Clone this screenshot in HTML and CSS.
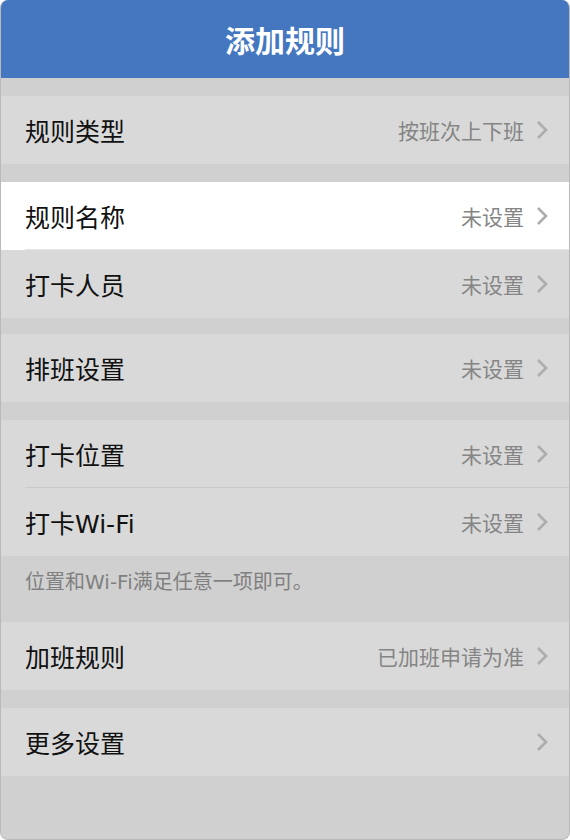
FILE: index.html
```html
<!DOCTYPE html>
<html lang="zh-CN">

<head>
  <meta charset="UTF-8">
  <meta name="viewport" content="width=device-width, initial-scale=1.0">
  <title>添加规则</title>
  <link rel="stylesheet" href="styles.css">
</head>

<body>
  <div class="app">
    <header>添加规则</header>

    <div class="group">
      <div class="row"><span class="label">规则类型</span><span class="value">按班次上下班</span><svg class="arrow" viewBox="0 0 12 20"><polyline points="2,2 10,10 2,18" /></svg></div>
    </div>

    <div class="group">
      <div class="row active"><span class="label">规则名称</span><span class="value">未设置</span><svg class="arrow" viewBox="0 0 12 20"><polyline points="2,2 10,10 2,18" /></svg></div>
      <div class="row"><span class="label">打卡人员</span><span class="value">未设置</span><svg class="arrow" viewBox="0 0 12 20"><polyline points="2,2 10,10 2,18" /></svg></div>
    </div>

    <div class="group small-gap">
      <div class="row"><span class="label">排班设置</span><span class="value">未设置</span><svg class="arrow" viewBox="0 0 12 20"><polyline points="2,2 10,10 2,18" /></svg></div>
    </div>

    <div class="group">
      <div class="row"><span class="label">打卡位置</span><span class="value">未设置</span><svg class="arrow" viewBox="0 0 12 20"><polyline points="2,2 10,10 2,18" /></svg></div>
      <div class="row"><span class="label">打卡Wi-Fi</span><span class="value">未设置</span><svg class="arrow" viewBox="0 0 12 20"><polyline points="2,2 10,10 2,18" /></svg></div>
    </div>
    <p class="note">位置和Wi-Fi满足任意一项即可。</p>

    <div class="group no-gap">
      <div class="row"><span class="label">加班规则</span><span class="value">已加班申请为准</span><svg class="arrow" viewBox="0 0 12 20"><polyline points="2,2 10,10 2,18" /></svg></div>
    </div>

    <div class="group">
      <div class="row"><span class="label">更多设置</span><span class="value"></span><svg class="arrow" viewBox="0 0 12 20"><polyline points="2,2 10,10 2,18" /></svg></div>
    </div>
  </div>
</body>

</html>
```

FILE: styles.css
```css
body {
  margin: 0;
  padding: 0;
  background: #ffffff;
  font-family: "DejaVu Sans", "Noto Sans CJK SC", sans-serif;
}

.app {
  box-sizing: border-box;
  width: 570px;
  height: 840px;
  background: #d0d0d0;
  border: 1px solid #b9b9b9;
  border-top: none;
  border-radius: 8px;
  overflow: hidden;
}

header {
  height: 78px;
  background-color: #4477bf;
  color: white;
  font-size: 30px;
  font-weight: bold;
  display: flex;
  align-items: center;
  justify-content: center;
}

.group {
  margin-top: 18px;
  background: #d9d9d9;
}

.group.small-gap {
  margin-top: 16px;
}

.group.no-gap {
  margin-top: 0;
}

.row {
  height: 68px;
  display: flex;
  align-items: center;
  padding: 0 20px 0 24px;
  position: relative;
}

/* inset separator between rows of one group */
.row + .row::before {
  content: "";
  position: absolute;
  top: -1px;
  left: 24px;
  right: 0;
  height: 1px;
  background: #c9c9c9;
}

.row.active {
  background: #ffffff;
}

.row.active + .row::before {
  background: #e6e6e6;
}

.label {
  flex: 1;
  font-size: 25px;
  color: #111111;
}

.value {
  font-size: 21px;
  color: #858585;
}

.arrow {
  width: 12px;
  height: 20px;
  margin-left: 12px;
  margin-right: 1px;
  fill: none;
  stroke: #adadad;
  stroke-width: 2.6;
}

.note {
  margin: 0;
  height: 66px;
  box-sizing: border-box;
  padding: 10px 24px 0;
  font-size: 20px;
  color: #808080;
}
```
